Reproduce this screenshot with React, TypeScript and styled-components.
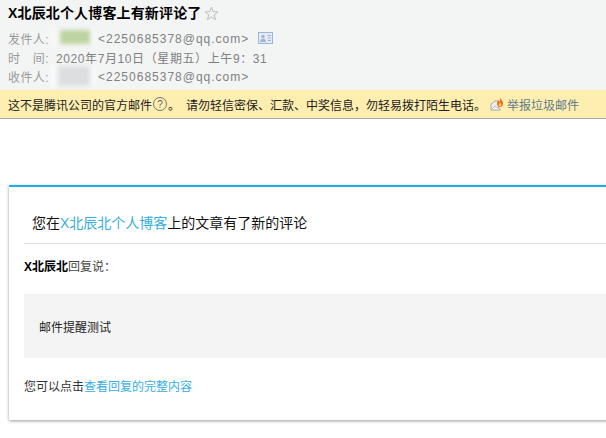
import React from 'react';
import styled, { createGlobalStyle } from 'styled-components';

const Global = createGlobalStyle`
  html, body { margin: 0; padding: 0; background: #fff; overflow: hidden; }
  body { font-family: "Liberation Sans", "Noto Sans CJK SC", sans-serif; }
`;
const Page = styled.div`width: 606px; height: 438px; overflow: hidden; background: #fff;`;
const Header = styled.header`
  box-sizing: border-box; height: 90px; background: #f3f5f5; padding: 3px 8px 0;
`;
const TitleRow = styled.div`display: flex; align-items: center; height: 20px; gap: 3px;`;
const Title = styled.h1`margin: 0; font-size: 14px; line-height: 20px; font-weight: 700; color: #000; letter-spacing: 0.15px;`;
const MetaRows = styled.div`margin-top: 6px; display: flex; flex-direction: column;`;
const MetaRow = styled.div`
  position: relative; display: flex; align-items: center; height: 19px;
  font-size: 12px; color: #8c8c8c; white-space: nowrap;
`;
const MetaLabel = styled.span`width: 48px; flex: none; color: #999; letter-spacing: 0.4px;`;
const MetaValue = styled.span<{ $indent?: number; $spacing: number }>`
  margin-left: ${p => p.$indent ?? 0}px; letter-spacing: ${p => p.$spacing}px; color: #808080;
`;
const Blur = styled.span<{ $left: number; $width: number; $color: string; $top: number; $height: number }>`
  position: absolute; left: ${p => p.$left}px; top: ${p => p.$top}px;
  width: ${p => p.$width}px; height: ${p => p.$height}px; background: ${p => p.$color}; filter: blur(2px);
`;
const Notice = styled.div`
  box-sizing: border-box; height: 29px; background: #feeeb0; border-bottom: 1px solid #aaa;
  padding: 0 8px; display: flex; align-items: center; font-size: 12px; color: #222; white-space: nowrap;
`;
const NoticeText = styled.span`display: inline-flex; align-items: center;`;
const Warn = styled.span`margin-left: 6px;`;
const ReportLink = styled.span`display: inline-flex; align-items: center; gap: 3px; margin-left: 4px; color: #5f7a8c;`;
const Card = styled.section`
  box-sizing: border-box; width: 640px; height: 235px; margin: 66px 0 0 9px;
  border-top: 2px solid #1cb0e0; background: #fff; box-shadow: 0 1px 3px rgba(0,0,0,.4);
  padding: 0 0 0 15px;
`;
const CardTitle = styled.h2`
  margin: 0; box-sizing: border-box; height: 57px; padding: 26px 0 0 8px;
  font-size: 14px; line-height: 20px; font-weight: 400; color: #111; border-bottom: 1px solid #ddd;
`;
const Link = styled.span`color: #35aee0;`;
const Said = styled.p`margin: 14px 0 0; font-size: 12px; line-height: 18px; color: #444;`;
const Name = styled.strong`color: #000;`;
const Quote = styled.div`
  margin-top: 18px; height: 64px; background: #f4f4f4; display: flex; align-items: center;
  padding-left: 15px; font-size: 12px; color: #222;
`;
const Footer = styled.p`margin: 20px 0 0; font-size: 12px; line-height: 18px; color: #333;`;

const Star = () => (
  <svg width="15" height="15" viewBox="0 0 15 15" style={{ display: 'block' }}>
    <path d="M7.5 1.2 9.2 5.700 14 5.900 10.200 8.900 11.600 13.700 7.500 11 3.400 13.700 4.800 8.900 1 5.900 5.800 5.700Z" fill="none" stroke="#bcbcbc" />
  </svg>
);
const CardIcon = () => (
  <svg width="15" height="13" viewBox="0 0 15 13" style={{ display: 'block', marginLeft: 9 }}>
    <rect x=".5" y=".5" width="14" height="11" fill="#e3ebf5" stroke="#9db5d6" />
    <circle cx="5" cy="4.500" r="1.700" fill="#9db5d6" />
    <path d="M2 10c0-2.500 1.400-3.200 3-3.200s3 .7 3 3.200z" fill="#9db5d6" />
    <path d="M9.500 3.500h3.500M9.500 6h3.500M9.500 8.500h3.500" stroke="#9db5d6" />
  </svg>
);
const Help = () => (
  <svg width="14" height="14" viewBox="0 0 14 14" style={{ display: 'block', margin: '0 1px' }}>
    <circle cx="7" cy="7" r="6.500" fill="none" stroke="#777" />
    <text x="7" y="10.500" fontSize="10" textAnchor="middle" fill="#666" fontFamily="Liberation Sans">?</text>
  </svg>
);
const SpamIcon = () => (
  <svg width="14" height="14" viewBox="0 0 14 14" style={{ display: 'block' }}>
    <path d="M1 7 5 4h4v9H1z" fill="#eee" stroke="#aaa" />
    <path d="M1 13 5 9l6 4z" fill="#f8f8f8" stroke="#bbb" />
    <path d="M10 .5c.5 2 3 3 3 6 0 2-1.300 3.500-3 3.500S7 8.500 7 6.500c0-1.500 1-2 1-3 1 .3 1.500 1 1.500 1.500.5-1 .7-2.500.5-4.500z" fill="#f0691e" />
    <path d="M10 5c.3 1 1.300 1.500 1.300 2.700 0 1-.6 1.700-1.300 1.700s-1.300-.7-1.300-1.700C8.700 6.500 9.800 6 10 5z" fill="#fbd24e" />
  </svg>
);

export default function App() {
  return (
    <Page>
      <Global />
      <Header>
        <TitleRow>
          <Title>X北辰北个人博客上有新评论了</Title>
          <Star />
        </TitleRow>
        <MetaRows>
          <MetaRow>
            <MetaLabel>发件人:</MetaLabel>
            <MetaValue $indent={42} $spacing={1}>&lt;2250685378@qq.com&gt;</MetaValue>
            <CardIcon />
            <Blur $left={42} $width={46} $top={1} $height={15} $color="#f7f8f6" />
            <Blur $left={52} $width={30} $top={1} $height={14} $color="#bdd3a0" />
          </MetaRow>
          <MetaRow>
            <MetaLabel>时　间:</MetaLabel>
            <MetaValue $spacing={0.6}>2020年7月10日（星期五）上午9：31</MetaValue>
          </MetaRow>
          <MetaRow>
            <MetaLabel>收件人:</MetaLabel>
            <MetaValue $indent={42} $spacing={1}>&lt;2250685378@qq.com&gt;</MetaValue>
            <Blur $left={42} $width={46} $top={-1} $height={20} $color="#f9f9fa" />
            <Blur $left={50} $width={32} $top={-1} $height={20} $color="#dcdee0" />
          </MetaRow>
        </MetaRows>
      </Header>
      <Notice>
        <NoticeText>这不是腾讯公司的官方邮件<Help />。</NoticeText>
        <Warn>请勿轻信密保、汇款、中奖信息，勿轻易拨打陌生电话。</Warn>
        <ReportLink><SpamIcon />举报垃圾邮件</ReportLink>
      </Notice>
      <Card>
        <CardTitle>您在<Link>X北辰北个人博客</Link>上的文章有了新的评论</CardTitle>
        <Said><Name>X北辰北</Name>回复说：</Said>
        <Quote>邮件提醒测试</Quote>
        <Footer>您可以点击<Link>查看回复的完整内容</Link></Footer>
      </Card>
    </Page>
  );
}
